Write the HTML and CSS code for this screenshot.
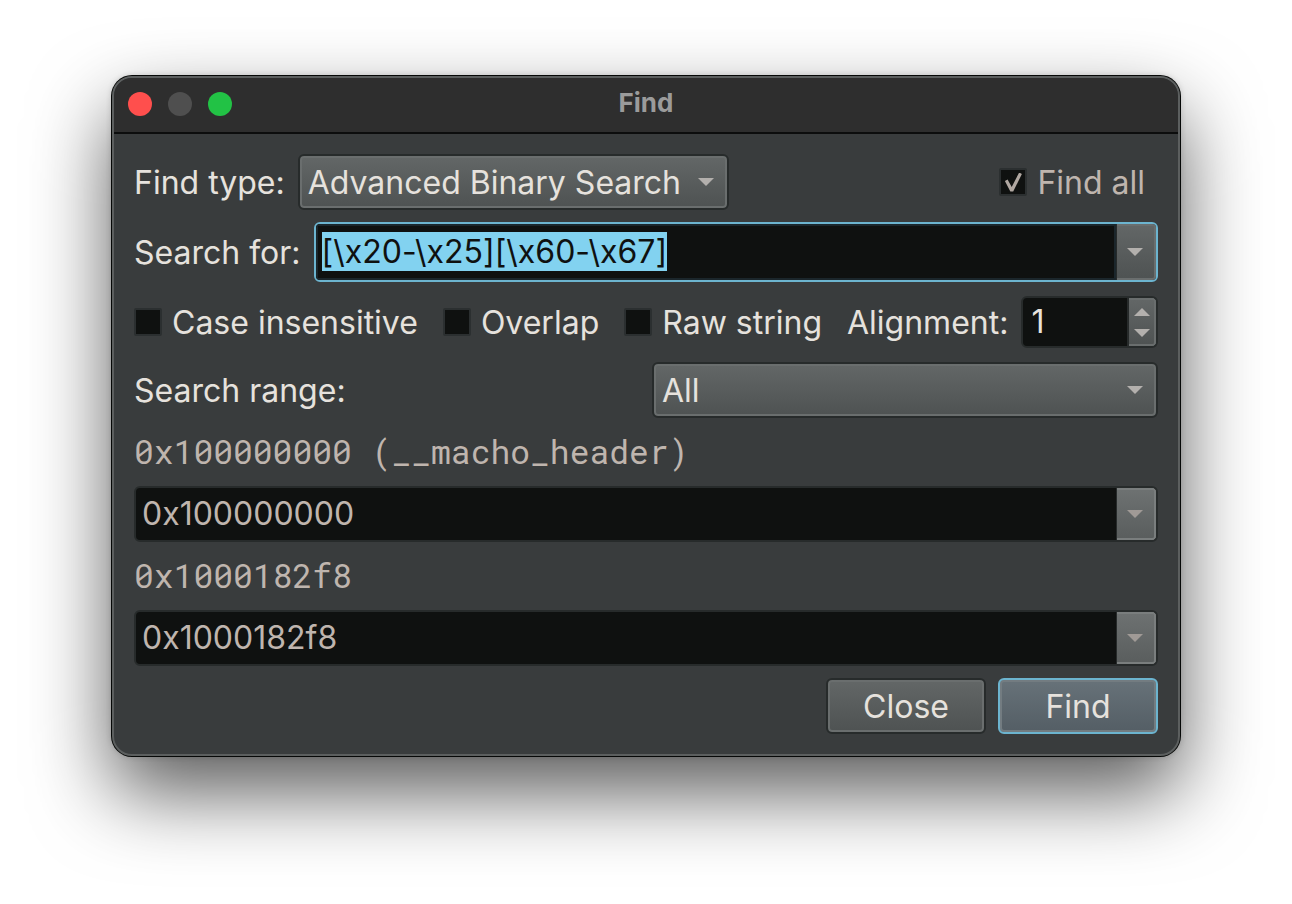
FILE: index.html
```html
<!DOCTYPE html>
<html lang="en">
<head>
<meta charset="utf-8">
<meta name="viewport" content="width=device-width, initial-scale=1">
<title>Find</title>
<link rel="stylesheet" href="styles.css">
</head>
<body>
<main class="window">
  <header class="titlebar">
    <div class="lights">
      <button class="light light-close" type="button" aria-label="Close window"></button>
      <button class="light light-min" type="button" aria-label="Minimize window" disabled></button>
      <button class="light light-zoom" type="button" aria-label="Zoom window"></button>
    </div>
    <h1 class="title">Find</h1>
  </header>
  <form class="content">
    <div class="row">
      <label class="text" for="find-type">Find type:</label>
      <div class="picker">
        <select class="select" id="find-type"><option>Advanced Binary Search</option></select>
        <svg class="arrow" viewBox="0 0 16 8" aria-hidden="true"><path d="M0 0H16L8 8Z"/></svg>
      </div>
      <label class="check check-end disabled"><input class="box" type="checkbox" checked disabled><span class="caption">Find all</span></label>
    </div>

    <div class="row">
      <label class="text" for="needle">Search for:</label>
      <div class="combo combo-focus">
        <input class="field" id="needle" type="text" value="[\x20-\x25][\x60-\x67]" spellcheck="false" autocomplete="off">
        <button class="drop" type="button" aria-label="Search history"><svg class="tri" viewBox="0 0 16 8" aria-hidden="true"><path d="M0 0H16L8 8Z"/></svg></button>
      </div>
    </div>

    <div class="row">
      <label class="check"><input class="box" type="checkbox"><span class="caption">Case insensitive</span></label>
      <label class="check"><input class="box" type="checkbox"><span class="caption">Overlap</span></label>
      <label class="check"><input class="box" type="checkbox"><span class="caption">Raw string</span></label>
      <label class="text" for="alignment">Alignment:</label>
      <div class="combo spin">
        <input class="field" id="alignment" type="text" inputmode="numeric" value="1">
        <div class="steps">
          <button class="step" type="button" aria-label="Increase"><svg class="tri" viewBox="0 0 16 8" aria-hidden="true"><path d="M0 8H16L8 0Z"/></svg></button>
          <button class="step" type="button" aria-label="Decrease"><svg class="tri" viewBox="0 0 16 8" aria-hidden="true"><path d="M0 0H16L8 8Z"/></svg></button>
        </div>
      </div>
    </div>

    <div class="row">
      <label class="caption half" for="range">Search range:</label>
      <div class="picker half">
        <select class="select" id="range"><option>All</option></select>
        <svg class="arrow" viewBox="0 0 16 8" aria-hidden="true"><path d="M0 0H16L8 8Z"/></svg>
      </div>
    </div>

    <label class="mono" for="range-start">0x100000000 (__macho_header)</label>
    <div class="combo disabled">
      <input class="field" id="range-start" type="text" value="0x100000000" disabled>
      <button class="drop" type="button" aria-label="Start address history" disabled><svg class="tri" viewBox="0 0 16 8" aria-hidden="true"><path d="M0 0H16L8 8Z"/></svg></button>
    </div>

    <label class="mono" for="range-end">0x1000182f8</label>
    <div class="combo disabled">
      <input class="field" id="range-end" type="text" value="0x1000182f8" disabled>
      <button class="drop" type="button" aria-label="End address history" disabled><svg class="tri" viewBox="0 0 16 8" aria-hidden="true"><path d="M0 0H16L8 8Z"/></svg></button>
    </div>

    <div class="row actions">
      <button class="button" type="button">Close</button>
      <button class="button button-default" type="button">Find</button>
    </div>
  </form>
</main>
<script src="script.js"></script>
</body>
</html>
```
FILE: styles.css
```css
*, *::before, *::after { box-sizing: border-box; }

html { background: #fff; }

body {
  min-height: 100vh;
  margin: 0;
  padding: 76px 112px 144px;
  color: #e6e2dd;
  font: 400 32px/40px Inter, "Liberation Sans", sans-serif;
  font-variant-ligatures: no-contextual;
}

input, select, button {
  margin: 0;
  font: inherit;
  font-variant-ligatures: inherit;
  color: inherit;
  outline: none;
  appearance: none;
}

.window {
  border: 2px solid #5c5f5f;
  border-radius: 20px;
  background: #393c3d;
  overflow: hidden;
  box-shadow: 0 0 0 1px #060807, 0 0 6px rgba(0, 0, 0, .2), 0 36px 80px rgba(0, 0, 0, .65);
}

.titlebar {
  display: grid;
  grid-template-columns: 1fr auto 1fr;
  align-items: center;
  height: 56px;
  padding: 0 14px 2px;
  border-bottom: 2px solid #0c0d0d;
  background: #2e2e2e;
}

.lights { display: flex; gap: 16px; }

.light {
  width: 24px;
  height: 24px;
  padding: 0;
  border: 0;
  border-radius: 50%;
}
.light-close { background: #ff4f4d; }
.light-min { background: #4f4f4f; }
.light-zoom { background: #22c245; }

.title {
  margin: 0;
  padding-bottom: 2px;
  color: #9b9b9b;
  font-size: 26px;
  font-weight: 700;
  line-height: 32px;
}

.content {
  display: flex;
  flex-direction: column;
  gap: 12px;
  padding: 20px;
}

.row {
  display: flex;
  align-items: center;
  gap: 12px;
  min-height: 56px;
}

.half { flex: 1; }

.text { padding: 2px 1px 0 0; }
.caption { padding-top: 2px; }

.picker { display: grid; align-items: center; }

.select {
  grid-area: 1 / 1;
  width: 100%;
  height: 56px;
  padding: 2px 45px 0 8px;
}

.select, .button {
  border: 2px solid #272b2b;
  border-radius: 6px;
  background: linear-gradient(#636767, #4e5252);
  box-shadow: inset 0 0 0 2px #6a6e6e;
}

.arrow {
  grid-area: 1 / 1;
  justify-self: end;
  width: 16px;
  height: 8px;
  margin-right: 15px;
  fill: #b3b0ad;
  pointer-events: none;
}

.check {
  display: flex;
  align-items: center;
  gap: 10px;
  padding-right: 13px;
  white-space: nowrap;
}
.check-end { margin-left: auto; }

.box {
  display: grid;
  place-items: center;
  width: 28px;
  height: 28px;
  border: 2px solid #2b2f30;
  border-radius: 2px;
  background: #0f1110;
}
.box:checked::before {
  content: "";
  width: 17px;
  height: 19px;
  background: #b0a7a1;
  clip-path: polygon(0 45%, 16% 37%, 40% 76%, 84% 0, 100% 8%, 49% 100%, 32% 100%);
}

.disabled { color: #bfb5ae; }

.combo {
  display: flex;
  flex: 1;
  min-width: 0;
  border: 2px solid #272b2b;
  border-radius: 6px;
  background: #0f1110;
  overflow: hidden;
}
.content > .combo { flex: none; }

.field {
  flex: 1;
  min-width: 0;
  width: 100%;
  height: 52px;
  padding: 0 6px 2px;
  border: 0;
  background: transparent;
  line-height: 40px;
}
.field::selection { background: #82d2f0; color: #0f1110; }

.combo-focus { border-color: #6cb4cf; }
.combo-focus .field {
  height: 56px;
  box-shadow: inset 0 0 0 2px #1b262b;
}

.drop {
  display: grid;
  flex: none;
  place-items: center;
  width: 40px;
  padding: 0 3px 0 0;
  border: 0;
  border-left: 1px solid #272b2b;
  border-radius: 0 4px 4px 0;
  background: linear-gradient(#636767, #4e5252);
  box-shadow: inset -2px 0 #6a6e6e, inset 0 2px #6a6e6e, inset 0 -2px #6a6e6e;
}
.disabled .drop {
  background: linear-gradient(#6e7272, #595d5d);
  box-shadow: inset -2px 0 #7a7e7e, inset 0 2px #7a7e7e, inset 0 -2px #7a7e7e;
}

.tri { display: block; width: 16px; height: 8px; fill: #b3b0ad; }
.disabled .tri { fill: #a09a96; }

.spin .field { height: 48px; padding-left: 8px; }

.steps {
  display: flex;
  flex: none;
  flex-direction: column;
  justify-content: center;
  gap: 13px;
  width: 29px;
  padding-right: 2px;
  border-left: 2px solid #272b2b;
  border-radius: 0 4px 4px 0;
  background: linear-gradient(#636767, #4e5252);
  box-shadow: inset -2px 0 #6a6e6e, inset 0 2px #6a6e6e, inset 0 -2px #6a6e6e;
}
.step {
  display: grid;
  place-items: center;
  padding: 0;
  border: 0;
  background: none;
}

.mono {
  padding-bottom: 2px;
  color: #bfb5ae;
  font: 400 33px/42px "Roboto Mono", "DejaVu Sans Mono", monospace;
}

.actions { justify-content: flex-end; }

.button {
  width: 160px;
  height: 56px;
  padding: 2px 0 0;
}
.button-default {
  border-color: #6cb4cf;
  background: linear-gradient(#677279, #545e65);
  box-shadow: inset 0 0 0 2px #737c81;
}
```
FILE: script.js
```js
const needle = document.getElementById("needle");
needle.focus();
needle.select();
```
